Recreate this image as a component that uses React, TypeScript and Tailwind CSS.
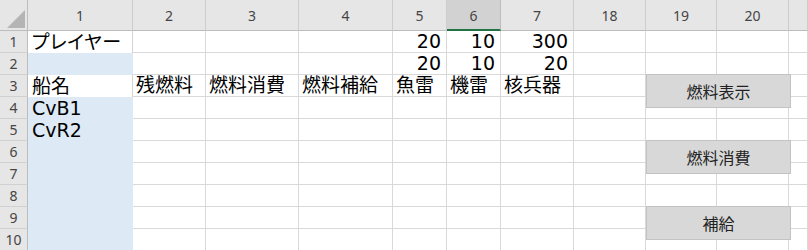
import React from "react";

const cols = ["1", "2", "3", "4", "5", "6", "7", "18", "19", "20", ""];

type Cell = { text?: string; align?: "left" | "right" };

// rows 1..10, columns 1..7 (columns 18-20 are empty)
const data: Cell[][] = [
  [{ text: "プレイヤー" }, {}, {}, {}, { text: "20", align: "right" }, { text: "10", align: "right" }, { text: "300", align: "right" }],
  [{}, {}, {}, {}, { text: "20", align: "right" }, { text: "10", align: "right" }, { text: "20", align: "right" }],
  [{ text: "船名" }, { text: "残燃料" }, { text: "燃料消費" }, { text: "燃料補給" }, { text: "魚雷" }, { text: "機雷" }, { text: "核兵器" }],
  [{ text: "CvB1" }],
  [{ text: "CvR2" }],
  [],
  [],
  [],
  [],
  [],
];

const cellFont = "font-['DejaVu_Sans','Noto_Sans_CJK_JP',sans-serif] text-[19px] leading-[21px] text-black";
const headFont = "font-['Noto_Sans','Noto_Sans_CJK_JP',sans-serif] text-[14px] text-[#444]";

function SheetButton({ label, top }: { label: string; top: string }) {
  return (
    <div
      className={`absolute left-[646px] ${top} w-[145px] h-[34px] flex items-center justify-center bg-[#d8d8d8] border border-[#c3c3c3] font-['Noto_Sans_CJK_JP',sans-serif] text-[16px] text-[#222]`}
    >
      {label}
    </div>
  );
}

export default function App() {
  return (
    <div className="relative w-[808px] h-[250px] overflow-hidden bg-white">
      <div className="grid grid-cols-[28px_105px_73px_93px_94px_54px_54px_73px_72px_71px_72px_1fr] grid-rows-[31px_repeat(10,22px)]">
        {/* corner */}
        <div className="relative bg-[#e6e6e6] border-r border-b border-[#bdbdbd]">
          <svg className="absolute left-[7px] top-[10px]" width="18" height="18" viewBox="0 0 18 18">
            <path d="M18 0 L18 18 L0 18 Z" fill="#b4b4b4" />
          </svg>
        </div>
        {cols.map((c, i) =>
          c === "6" ? (
            <div
              key={i}
              className={`flex items-center justify-center bg-[#d2d2d2] border-r border-[#bdbdbd] border-b-2 border-b-[#217346] pt-[1px] ${headFont} text-[#3f6f52]`}
            >
              {c}
            </div>
          ) : (
            <div
              key={i}
              className={`flex items-center justify-center bg-[#e6e6e6] border-r border-r-[#cdcdcd] border-b border-b-[#bdbdbd] ${headFont}`}
            >
              {c}
            </div>
          )
        )}

        {data.map((row, r) => (
          <React.Fragment key={r}>
            <div
              className={`flex items-center justify-center bg-[#e6e6e6] border-r border-r-[#bdbdbd] border-b border-b-[#d0d0d0] ${headFont}`}
            >
              {r + 1}
            </div>
            {cols.map((_, c) => {
              const cell = row[c] ?? {};
              if (c === 0) {
                const blue = r === 1 || r >= 3;
                return (
                  <div
                    key={c}
                    className={`flex items-end pl-[4px] whitespace-nowrap ${cellFont} ${
                      blue ? "bg-[#dde9f5]" : "bg-white border-r border-[#d4d4d4]"
                    } ${r === 0 ? "[font-feature-settings:'palt'] tracking-[0.5px]" : ""}`}
                  >
                    {cell.text}
                  </div>
                );
              }
              return (
                <div
                  key={c}
                  className={`flex items-end whitespace-nowrap border-r border-b border-[#d9d9d9] ${cellFont} ${
                    cell.align === "right" ? "justify-end pr-[5px]" : "pl-[3px]"
                  }`}
                >
                  {cell.text}
                </div>
              );
            })}
          </React.Fragment>
        ))}
      </div>

      <SheetButton label="燃料表示" top="top-[74px]" />
      <SheetButton label="燃料消費" top="top-[140px]" />
      <SheetButton label="補給" top="top-[206px]" />
    </div>
  );
}
